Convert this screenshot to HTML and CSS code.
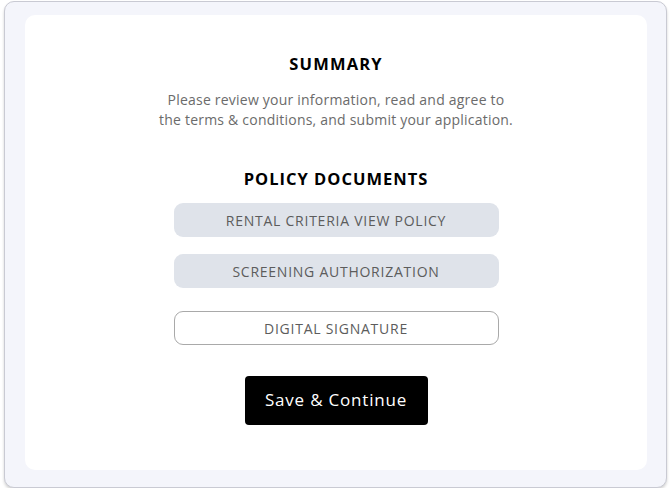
FILE: index.html
```html
<!DOCTYPE html>
<html lang="en">
<head>
    <meta charset="UTF-8">
    <meta name="viewport" content="width=device-width, initial-scale=1.0">
    <title>Summary</title>
    <link rel="stylesheet" href="styles.css">
</head>
<body>
    <div class="frame">
        <div class="card">
            <h2 class="title">SUMMARY</h2>
            <p class="intro">Please review your information, read and agree to<br>the terms &amp; conditions, and submit your application.</p>

            <h2 class="title docs-title">POLICY DOCUMENTS</h2>
            <div class="doc-list">
                <button class="doc-button">RENTAL CRITERIA VIEW POLICY</button>
                <button class="doc-button">SCREENING AUTHORIZATION</button>
                <button class="doc-button outline">DIGITAL SIGNATURE</button>
            </div>

            <button class="save-button">Save &amp; Continue</button>
        </div>
    </div>
</body>
</html>
```

FILE: styles.css
```css
* { margin: 0; padding: 0; box-sizing: border-box; }

body {
    font-family: 'Open Sans', 'Noto Sans', sans-serif;
    background: #ffffff;
    color: #000000;
    padding: 1px 5px 0 4px;
}

.frame {
    width: 663px;
    height: 487px;
    background: #f4f5fb;
    border: 1px solid #c9cad3;
    border-radius: 10px;
    box-shadow: 0 2px 3px rgba(0, 0, 0, 0.18);
    padding: 13px 19px 17px 20px;
}

.card {
    background: #ffffff;
    border-radius: 10px;
    height: 100%;
    display: flex;
    flex-direction: column;
    align-items: center;
    padding-top: 38px;
}

.title {
    font-size: 16.5px;
    font-weight: 700;
    letter-spacing: 1.2px;
    line-height: 22px;
}

.intro {
    margin-top: 15px;
    font-size: 14px;
    line-height: 20px;
    letter-spacing: 0.22px;
    color: #6b6b6b;
    text-align: center;
}

.docs-title {
    font-size: 16.5px;
    letter-spacing: 1px;
    margin-top: 38px;
}

.doc-list {
    display: flex;
    flex-direction: column;
    gap: 17px;
    margin-top: 13px;
}

.doc-button {
    width: 325px;
    height: 34px;
    border: none;
    border-radius: 9px;
    background: #dfe3ea;
    color: #5c5c5c;
    font-family: inherit;
    font-size: 14px;
    letter-spacing: 0.75px;
}

.doc-button.outline {
    margin-top: 6px;
    background: #ffffff;
    border: 1px solid #a9a9a9;
}

.save-button {
    margin-top: 31px;
    width: 183px;
    height: 49px;
    border: none;
    border-radius: 4px;
    background: #000000;
    color: #ffffff;
    font-family: inherit;
    font-size: 17px;
    font-weight: 500;
    letter-spacing: 0.8px;
    padding-bottom: 2px;
}
```
